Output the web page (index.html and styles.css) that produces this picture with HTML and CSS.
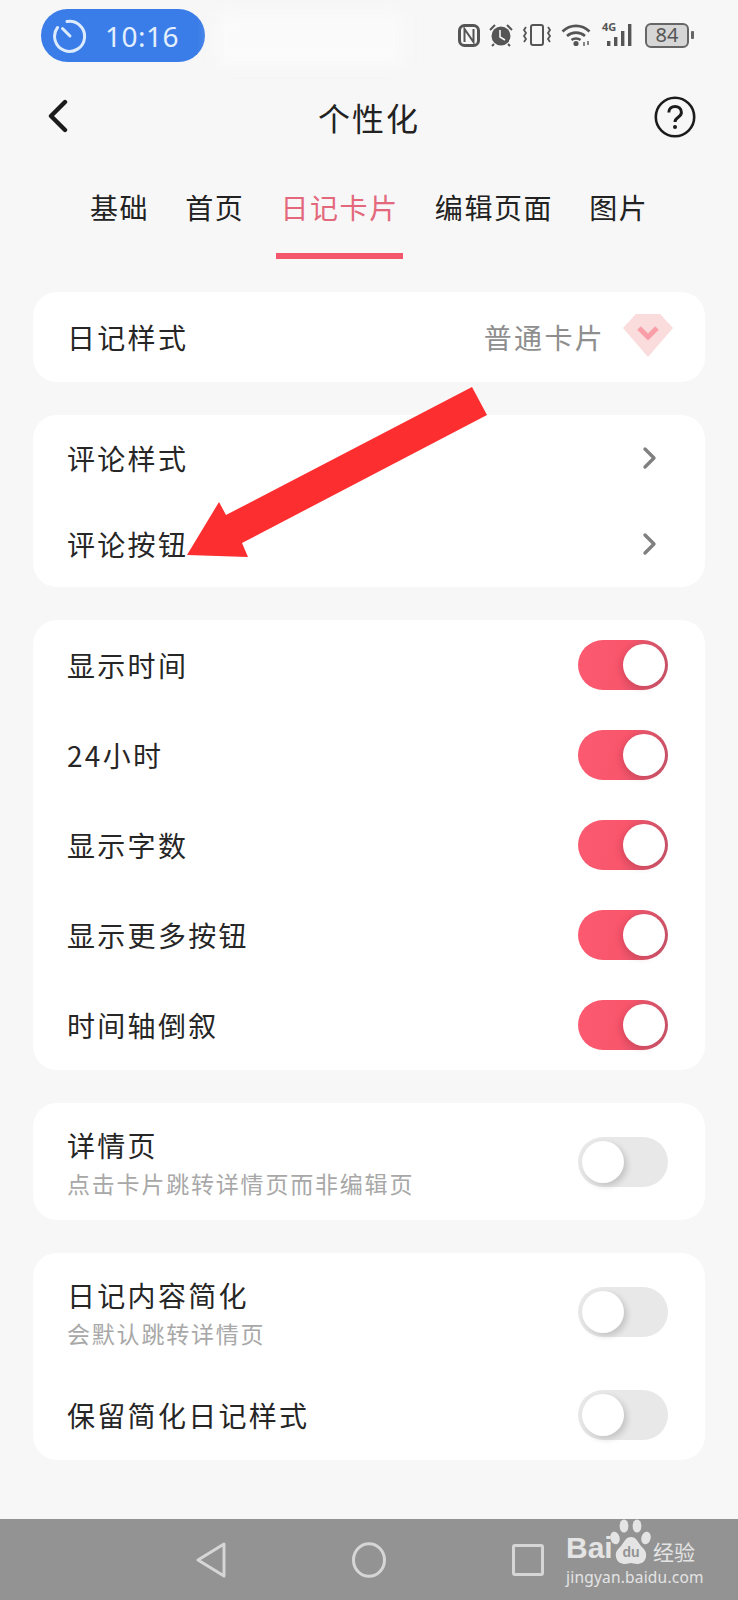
FILE: index.html
```html
<!DOCTYPE html>
<html lang="zh-CN">
<head>
  <meta charset="UTF-8">
  <meta name="viewport" content="width=device-width, initial-scale=1.0">
  <title>个性化</title>
  <link rel="stylesheet" href="styles.css">
</head>
<body>
<div class="screen">

  <!-- status bar -->
  <div class="status">
    <div class="timer-pill">
      <svg class="timer-icon" width="36" height="36" viewBox="0 0 36 36" fill="none" stroke="#dcebfd" stroke-width="3" stroke-linecap="round">
        <path d="M15 3.6A15 15 0 1 1 5.5 9.5"/>
        <path d="M10.5 10.5L18 18"/>
      </svg>
      <span class="timer-text">10:16</span>
    </div>
    <div class="status-icons">
      <svg width="22" height="23" viewBox="0 0 22 23" fill="none" stroke="#555" stroke-width="3">
        <rect x="1.5" y="1.5" width="19" height="20" rx="5"/>
        <path d="M6.5 18V5L15.5 18V5" stroke-width="2"/>
      </svg>
      <svg width="24" height="24" viewBox="0 0 24 24" fill="#555">
        <circle cx="12" cy="13" r="9.5"/>
        <path d="M5 21l-2 2M19 21l2 2" stroke="#555" stroke-width="2"/>
        <path d="M1 7l5-5M23 7l-5-5" stroke="#555" stroke-width="2"/>
        <path d="M11 7v7l5 3" fill="none" stroke="#f7f7f7" stroke-width="1.6"/>
      </svg>
      <svg width="30" height="24" viewBox="0 0 30 24" fill="none" stroke="#555" stroke-width="2">
        <rect x="9" y="2" width="12" height="20" rx="2"/>
        <path d="M4 4l-2 3 2 3-2 3 2 3-2 3M26 4l2 3-2 3 2 3-2 3 2 3" stroke-width="1.8"/>
      </svg>
      <svg width="32" height="24" viewBox="0 0 32 24" fill="none" stroke="#555" stroke-width="2.6">
        <path d="M1.5 8.5C9 1 21 1 28.5 8.5"/>
        <path d="M6 13C11 8.5 19 8.5 24 13"/>
        <path d="M10.5 17C13 15 17 15 19.5 17"/>
        <circle cx="15" cy="20.5" r="2.6" fill="#555" stroke="none"/>
        <path d="M23 19v4M27 22v-4" stroke-width="1.4"/>
      </svg>
      <div class="signal">
        <span class="net">4G</span>
        <svg width="34" height="24" viewBox="0 0 34 24" fill="#555">
          <rect x="5" y="18" width="3.4" height="5"/>
          <rect x="12" y="14" width="3.4" height="9"/>
          <rect x="19" y="8" width="3.4" height="15"/>
          <rect x="26" y="1" width="3.4" height="22"/>
        </svg>
      </div>
      <div class="battery">
        <span class="battery-box">84</span>
        <span class="battery-nub"></span>
      </div>
    </div>
    <div class="smudge"></div>
  </div>

  <!-- title -->
  <div class="header">
    <svg class="back" width="22" height="34" viewBox="0 0 22 34" fill="none" stroke="#1c1c1c" stroke-width="4.4" stroke-linecap="round" stroke-linejoin="round">
      <path d="M18 3L4 17l14 14"/>
    </svg>
    <div class="title">个性化</div>
    <svg class="help" width="42" height="42" viewBox="0 0 42 42" fill="none" stroke="#1c1c1c">
      <circle cx="21" cy="21" r="19.2" stroke-width="2.6"/>
      <path d="M14.8 16.5c0-8 12.6-8 12.6 0 0 5-6.4 4.6-6.4 9.5" stroke-width="3"/>
      <circle cx="21" cy="31" r="2" fill="#1c1c1c" stroke="none"/>
    </svg>
  </div>

  <!-- tabs -->
  <div class="tabs">
    <div class="tab">基础</div>
    <div class="tab">首页</div>
    <div class="tab active">日记卡片</div>
    <div class="tab">编辑页面</div>
    <div class="tab">图片</div>
  </div>

  <div class="cards">
    <div class="card">
      <div class="row row-single">
        <span class="label">日记样式</span>
        <div class="row-right">
          <span class="value">普通卡片</span>
          <svg class="diamond" width="50" height="44" viewBox="0 0 50 44">
            <path d="M13 1h24l13 14-25 29L0 15z" fill="#fbdcdc"/>
            <path d="M16 15l9 9 9-9" fill="none" stroke="#f99ea8" stroke-width="5"/>
          </svg>
        </div>
      </div>
    </div>

    <div class="card">
      <div class="row row-link">
        <span class="label">评论样式</span>
        <svg class="chevron" width="16" height="24" viewBox="0 0 16 24" fill="none" stroke="#808080" stroke-width="3.4" stroke-linecap="round" stroke-linejoin="round"><path d="M3 3l9 9-9 9"/></svg>
      </div>
      <div class="row row-link">
        <span class="label">评论按钮</span>
        <svg class="chevron" width="16" height="24" viewBox="0 0 16 24" fill="none" stroke="#808080" stroke-width="3.4" stroke-linecap="round" stroke-linejoin="round"><path d="M3 3l9 9-9 9"/></svg>
      </div>
    </div>

    <div class="card">
      <div class="row row-single"><span class="label">显示时间</span><div class="toggle on"><span class="knob"></span></div></div>
      <div class="row row-single"><span class="label">24小时</span><div class="toggle on"><span class="knob"></span></div></div>
      <div class="row row-single"><span class="label">显示字数</span><div class="toggle on"><span class="knob"></span></div></div>
      <div class="row row-single"><span class="label">显示更多按钮</span><div class="toggle on"><span class="knob"></span></div></div>
      <div class="row row-single"><span class="label">时间轴倒叙</span><div class="toggle on"><span class="knob"></span></div></div>
    </div>

    <div class="card">
      <div class="row row-double">
        <div class="text-stack">
          <span class="label">详情页</span>
          <span class="sub">点击卡片跳转详情页而非编辑页</span>
        </div>
        <div class="toggle"><span class="knob"></span></div>
      </div>
    </div>

    <div class="card">
      <div class="row row-double">
        <div class="text-stack">
          <span class="label">日记内容简化</span>
          <span class="sub">会默认跳转详情页</span>
        </div>
        <div class="toggle"><span class="knob"></span></div>
      </div>
      <div class="row row-single">
        <span class="label">保留简化日记样式</span>
        <div class="toggle"><span class="knob"></span></div>
      </div>
    </div>
  </div>

  <!-- system nav -->
  <div class="navbar">
    <svg width="30" height="36" viewBox="0 0 30 36" fill="none" stroke="#d6d6d6" stroke-width="3" stroke-linejoin="round"><path d="M28 2v32L2 18z"/></svg>
    <svg width="34" height="36" viewBox="0 0 34 36" fill="none" stroke="#d6d6d6" stroke-width="3"><ellipse cx="17" cy="18" rx="15.5" ry="16.3"/></svg>
    <svg width="32" height="32" viewBox="0 0 32 32" fill="none" stroke="#d6d6d6" stroke-width="3" stroke-linejoin="round"><rect x="1.5" y="1.5" width="29" height="29" rx="1.5"/></svg>
  </div>

  <!-- red annotation arrow drawn over the screenshot -->
  <svg class="arrow" width="738" height="1600" viewBox="0 0 738 1600">
    <path d="M472 387L487 415L242 543L248 557L187 555L219 502L226 515z" fill="#fd2e30"/>
  </svg>

  <!-- watermark -->
  <div class="watermark">
    <div class="wm-top">
      <span class="wm-bai">Bai</span>
      <span class="wm-paw">
        <svg width="42" height="48" viewBox="0 0 42 48" fill="#e4e4e4">
          <ellipse cx="5" cy="20" rx="4.6" ry="6.4" transform="rotate(-15 5 20)"/>
          <ellipse cx="14" cy="8" rx="4.4" ry="6.6"/>
          <ellipse cx="27" cy="8" rx="4.4" ry="6.6"/>
          <ellipse cx="36" cy="20" rx="4.6" ry="6.4" transform="rotate(15 36 20)"/>
          <path d="M21 19c5 0 7 5 10 9 3 3 6 6 5 11-1 5-5 7-9 7-3 0-4-1-6-1s-3 1-6 1c-4 0-8-2-9-7-1-5 2-8 5-11 3-4 5-9 10-9z"/>
        </svg>
        <span class="wm-du">du</span>
      </span>
      <span class="wm-cn">经验</span>
    </div>
    <div class="wm-url">jingyan.baidu.com</div>
  </div>

</div>
</body>
</html>
```

FILE: styles.css
```css
* { box-sizing: border-box; }
html, body { margin: 0; padding: 0; }
body {
  font-family: "Noto Sans CJK SC", "Noto Sans", sans-serif;
  background: #f7f7f7;
  color: #222;
}
.screen {
  position: relative;
  width: 738px;
  height: 1600px;
  display: flex;
  flex-direction: column;
  overflow: hidden;
}

/* status bar */
.status {
  position: relative;
  height: 71px;
  padding: 9px 44px 0 41px;
  display: flex;
  justify-content: space-between;
  align-items: flex-start;
}
.timer-pill {
  width: 164px;
  height: 53px;
  border-radius: 27px;
  background: #3b7de8;
  display: flex;
  align-items: center;
  padding-left: 11px;
  gap: 17px;
}
.timer-text {
  font-family: "Noto Sans", sans-serif;
  font-size: 28px;
  color: #e4effd;
  letter-spacing: 0.5px;
}
.status-icons {
  display: flex;
  align-items: center;
  gap: 9px;
  height: 24px;
  margin-top: 14px;
}
.signal { position: relative; width: 34px; height: 24px; }
.signal svg { display: block; }
.net {
  position: absolute;
  left: 0;
  top: -2px;
  font-family: "Noto Sans", sans-serif;
  font-size: 11px;
  font-weight: 700;
  line-height: 12px;
  color: #555;
}
.battery { display: flex; align-items: center; gap: 2px; }
.battery-box {
  width: 44px;
  height: 25px;
  border: 2px solid #666;
  border-radius: 6px;
  background: #d6d6d6;
  color: #555;
  font-family: "Noto Sans", sans-serif;
  font-size: 20px;
  line-height: 20px;
  text-align: center;
}
.battery-nub { width: 3px; height: 8px; background: #666; border-radius: 1px; }
.smudge {
  position: absolute;
  left: 215px;
  top: 12px;
  width: 190px;
  height: 55px;
  background: #fafafa;
  filter: blur(8px);
}

/* header */
.header {
  height: 92px;
  display: flex;
  align-items: center;
  justify-content: space-between;
  padding: 0 42px 0 47px;
  position: relative;
}
.back { margin-top: -2px; }
.help { margin-top: 0; }
.title {
  position: absolute;
  left: 0;
  right: 0;
  text-align: center;
  font-size: 32px;
  letter-spacing: 2px;
  line-height: 44px;
  color: #222;
}

/* tabs */
.tabs {
  display: flex;
  gap: 28px;
  padding-left: 86px;
  height: 96px;
}
.tab {
  padding: 0 4px;
  font-size: 28px;
  letter-spacing: 1.6px;
  line-height: 40px;
  padding-top: 24px;
  color: #222;
}
.tab.active {
  color: #e4687c;
  border-bottom: 6px solid #f4576c;
  border-radius: 0 0 0 0;
  height: 96px;
  position: relative;
}

/* cards */
.cards {
  display: flex;
  flex-direction: column;
  gap: 33px;
  padding: 33px 33px 0;
}
.card {
  background: #fff;
  border-radius: 24px;
}
.row {
  display: flex;
  align-items: center;
  justify-content: space-between;
  padding: 0 37px 0 34px;
}
.row-single { height: 90px; }
.row-link { height: 86px; padding-right: 47px; }
.row-double { height: 117px; }
.label {
  font-size: 28px;
  letter-spacing: 2.3px;
  line-height: 40px;
  color: #262626;
}
.sub {
  font-size: 23px;
  letter-spacing: 1.8px;
  line-height: 32px;
  color: #a8a8a8;
}
.text-stack { display: flex; flex-direction: column; gap: 2px; }
.row-right { display: flex; align-items: center; gap: 18px; margin-right: -5px; }
.value {
  font-size: 28px;
  letter-spacing: 2.3px;
  line-height: 40px;
  color: #8e8e8e;
}
.diamond { margin-top: -4px; }

/* switches */
.toggle {
  position: relative;
  width: 90px;
  height: 50px;
  border-radius: 25px;
  background: #e8e8e8;
  flex-shrink: 0;
}
.toggle.on {
  background: linear-gradient(100deg, #fb5a70 0%, #f9566c 50%, #c35368 100%);
}
.knob {
  position: absolute;
  left: 4px;
  top: 4px;
  width: 42px;
  height: 42px;
  border-radius: 50%;
  background: #fff;
  box-shadow: 3px 3px 6px rgba(0, 0, 0, 0.16);
}
.toggle.on .knob {
  left: 45px;
  box-shadow: -3px 2px 6px rgba(120, 20, 40, 0.2);
}

/* system nav */
.navbar {
  margin-top: auto;
  height: 81px;
  background: #939393;
  display: flex;
  align-items: center;
  gap: 126px;
  padding-left: 196px;
}

/* overlays */
.arrow {
  position: absolute;
  left: 0;
  top: 0;
  pointer-events: none;
}
.watermark {
  position: absolute;
  left: 566px;
  top: 1520px;
  width: 134px;
  color: #e4e4e4;
}
.wm-top { display: flex; align-items: flex-end; height: 46px; }
.wm-bai {
  font-family: "Liberation Sans", sans-serif;
  font-weight: 700;
  font-size: 30px;
  line-height: 34px;
  width: 44px;
  margin-bottom: 1px;
}
.wm-paw { position: relative; width: 42px; height: 46px; }
.wm-paw svg { position: absolute; left: 0; top: -2px; }
.wm-du {
  position: absolute;
  left: 10px;
  top: 24px;
  width: 22px;
  text-align: center;
  font-family: "Liberation Sans", sans-serif;
  font-weight: 700;
  font-size: 14px;
  line-height: 16px;
  color: #939393;
}
.wm-cn {
  font-size: 21px;
  line-height: 26px;
  margin-bottom: 2px;
  margin-left: 1px;
  white-space: nowrap;
}
.wm-url {
  font-family: "Noto Sans", sans-serif;
  font-size: 15.5px;
  line-height: 18px;
  letter-spacing: 0.2px;
  white-space: nowrap;
  margin-top: 2px;
}
```
